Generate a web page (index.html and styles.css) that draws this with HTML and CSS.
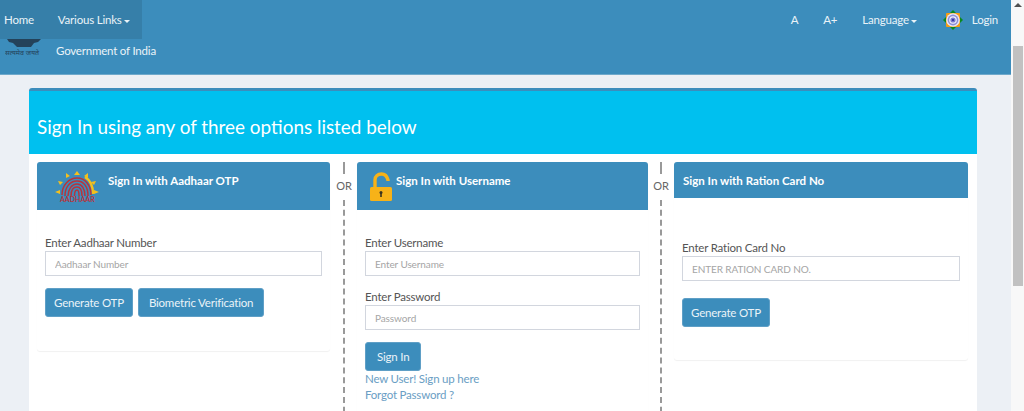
FILE: index.html
```html
<!DOCTYPE html>
<html>
<head>
  <meta charset="utf-8">
  <title>Sign In</title>
  <link rel="stylesheet" href="styles.css">
</head>
<body>
<div class="page">
  <div class="main">
    <div class="header">
      <div class="navbar">
        <div class="nav-left">
          <a class="nav-item home">Home</a>
          <a class="nav-item links">Various Links<span class="caret"></span></a>
        </div>
        <div class="nav-right">
          <a class="nav-item">A</a>
          <a class="nav-item">A+</a>
          <a class="nav-item lang">Language<span class="caret"></span></a>
          <a class="nav-item login">
            <svg class="chakra" width="20" height="20" viewBox="0 0 20 20">
              <path d="M10 0l4 4h-8zM10 20l-4-4h8zM0 10l4-4v8zM20 10l-4 4v-8z" fill="#0a8a1e"/>
              <rect x="3" y="3" width="14" height="14" rx="1" fill="#f59c12"/>
              <circle cx="10" cy="10" r="6.8" fill="#e8e8f8"/>
              <circle cx="10" cy="10" r="5.4" fill="#8f8fd8"/>
              <circle cx="10" cy="10" r="3.8" fill="#f2f2fc"/>
              <circle cx="10" cy="10" r="2.6" fill="#7a7ad0"/>
              <circle cx="10" cy="10" r="1" fill="#2a2a90"/>
            </svg>
            Login
          </a>
        </div>
      </div>
      <div class="brand">
        <div class="emblem">
          <svg width="38" height="9" viewBox="0 0 38 9">
            <path d="M2 0h34l-3 3-4 1-3 4h-14l-4-4-4-1z" fill="#24425a"/>
          </svg>
          <span class="motto">सत्यमेव जयते</span>
        </div>
        <span class="brand-name">Government of India</span>
      </div>
    </div>

    <div class="content">
      <div class="card">
        <div class="card-title">Sign In using any of three options listed below</div>
        <div class="columns">

          <div class="panel panel-aadhaar">
            <div class="panel-head head-tall">
              <div class="aadhaar-logo">
                <svg width="44" height="27" viewBox="0 0 44 27">
                  <g fill="#f5c01c">
                    <path d="M22 1l3 4h-6zM11 3l4 3-4 2zM33 3l-4 3 4 2zM3 11l5 1-3 3zM41 11l-5 1 3 3zM0 22l5-2v4zM44 22l-5-2v4z"/>
                  </g>
                  <path d="M30 7c5 3 8 9 8 17" fill="none" stroke="#f5c01c" stroke-width="2.5"/>
                  <g fill="none" stroke="#b8343c" stroke-width="1.5">
                    <path d="M7 25c0-10 7-17 15-17s14 7 14 17"/>
                    <path d="M10 26c0-9 5-15 12-15s11 6 11 15"/>
                    <path d="M13 26c0-7 4-12 9-12s8 5 8 12"/>
                    <path d="M16 26c0-5 2-9 6-9s5 4 5 9"/>
                    <path d="M19.500 26c0-3 1-6 2.500-6s2 3 2 6"/>
                  </g>
                </svg>
                <span class="aadhaar-word">AADHAAR</span>
              </div>
              <span class="head-text">Sign In with Aadhaar OTP</span>
            </div>
            <div class="panel-body">
              <label class="field-label">Enter Aadhaar Number</label>
              <input class="field" type="text" placeholder="Aadhaar Number">
              <div class="actions">
                <button class="btn">Generate OTP</button>
                <button class="btn btn-wide">Biometric Verification</button>
              </div>
            </div>
          </div>

          <div class="sep"><span class="dash short"></span><span class="or">OR</span><span class="dash"></span></div>

          <div class="panel panel-user">
            <div class="panel-head head-tall">
              <svg class="lock" width="24" height="30" viewBox="0 0 24 30">
                <path d="M6 16V8c0-4 3-6 6.500-6 3 0 5.500 2 6.500 6v1" fill="none" stroke="#f7b218" stroke-width="3.400"/>
                <rect x="1" y="15" width="22" height="14" rx="1.500" fill="#f7b218"/>
                <circle cx="12" cy="20.500" r="1.500" fill="#3a3320"/>
                <rect x="11.200" y="21" width="1.600" height="4" fill="#3a3320"/>
              </svg>
              <span class="head-text">Sign In with Username</span>
            </div>
            <div class="panel-body">
              <label class="field-label">Enter Username</label>
              <input class="field" type="text" placeholder="Enter Username">
              <label class="field-label second">Enter Password</label>
              <input class="field" type="password" placeholder="Password">
              <div class="actions">
                <button class="btn btn-sign">Sign In</button>
              </div>
              <a class="link">New User! Sign up here</a>
              <a class="link">Forgot Password ?</a>
            </div>
          </div>

          <div class="sep"><span class="dash short"></span><span class="or">OR</span><span class="dash"></span></div>

          <div class="panel panel-ration">
            <div class="panel-head head-short">
              <span class="head-text">Sign In with Ration Card No</span>
            </div>
            <div class="panel-body">
              <label class="field-label">Enter Ration Card No</label>
              <input class="field" type="text" placeholder="ENTER RATION CARD NO.">
              <div class="actions">
                <button class="btn">Generate OTP</button>
              </div>
            </div>
          </div>

        </div>
      </div>
    </div>
  </div>

  <div class="scrollbar">
    <span class="arrow"></span>
    <span class="thumb"></span>
  </div>
</div>
</body>
</html>
```

FILE: styles.css
```css
html, body { margin: 0; height: 411px; overflow: hidden; }
body { font-family: "Lato", "Open Sans", sans-serif; font-size: 11.5px; letter-spacing: -0.2px; color: #444; background: #ecf0f5; }
a { display: block; }

.page { display: flex; height: 411px; overflow: hidden; }
.main { flex: 1; min-width: 0; }

.header { height: 74px; background: #3c8dbc; border-bottom: 1px solid #6fa9cb; color: #eaf3f8; }
.navbar { display: flex; justify-content: space-between; height: 39px; }
.nav-left { display: flex; width: 142px; padding-left: 4px; box-sizing: border-box; background: #367fa9; }
.nav-right { display: flex; padding-right: 13px; }
.nav-item { line-height: 39px; white-space: nowrap; margin-left: 25px; }
.nav-left .nav-item { margin-left: 0; }
.nav-left .links { margin-left: 24px; }
.lang { margin-right: 1px; }
.caret { display: inline-block; width: 0; height: 0; margin-left: 2px; vertical-align: middle; border-top: 3px solid #eaf3f8; border-left: 3px solid transparent; border-right: 3px solid transparent; }
.login { display: flex; align-items: center; }
.chakra { margin-right: 9px; }

.brand { display: flex; align-items: flex-start; padding-left: 5px; }
.emblem { width: 51px; height: 19px; overflow: hidden; }
.emblem svg { display: block; }
.motto { display: block; font-family: "Noto Sans", sans-serif; font-size: 7px; line-height: 9px; letter-spacing: 0; color: #24425a; }
.brand-name { line-height: 24px; }

.content { padding: 13px 34px 0 29px; }
.card { height: 400px; background: #fff; border-top: 3px solid #3c8dbc; border-radius: 3px 3px 0 0; }
.card-title { height: 63px; padding: 23px 8px 0; box-sizing: border-box; background: #00c0ef; color: #fff; font-size: 18.900px; letter-spacing: 0; line-height: 26px; }

.columns { display: flex; height: 300px; padding: 8px 9px 0 8px; }
.panel { flex: none; align-self: flex-start; border-radius: 3px; box-shadow: 0 1px 1px rgba(0,0,0,0.06); }
.panel-aadhaar { width: 293px; height: 189px; }
.panel-user { width: 291px; height: 290px; }
.panel-ration { width: 294px; height: 198px; }

.panel-head { display: flex; background: #3c8dbc; color: #fff; font-weight: 700; font-size: 11.500px; letter-spacing: 0; border-radius: 3px 3px 0 0; }
.head-tall { height: 48px; }
.head-short { height: 36px; }
.head-text { line-height: 38px; }
.panel-aadhaar .head-text { margin-left: 9px; }
.panel-ration .head-text { margin-left: 9px; }

.aadhaar-logo { position: relative; width: 44px; margin-left: 18px; padding-top: 8px; }
.aadhaar-logo svg { display: block; }
.aadhaar-word { position: absolute; left: 5px; top: 33px; font-size: 7px; font-weight: 700; line-height: 8px; letter-spacing: 0; color: #b8343c; }
.lock { margin: 10px 3px 0 12px; }

.panel-body { padding: 25px 8px 0; }
.panel-ration .panel-body { padding-top: 42px; }

.field-label { display: block; line-height: 16px; color: #555; }
.field-label.second { margin-top: 13px; }
.field { display: block; width: 100%; height: 25px; box-sizing: border-box; padding: 0 9px; border: 1px solid #d2d6de; font-family: inherit; font-size: 10px; letter-spacing: -0.1px; background: #fff; outline: 0; }
.field::placeholder { color: #a5a5a5; }

.actions { display: flex; gap: 5px; margin-top: 12px; }
.btn { height: 29px; padding: 0 8px; background: #3c8dbc; border: 1px solid #5f9fc6; border-radius: 3px; color: #eaf3f8; font-family: inherit; font-size: 11.5px; letter-spacing: -0.2px; }
.btn-wide { padding: 0 10px; }
.btn-sign { padding: 0 11px; }
.panel-ration .actions { margin-top: 17px; }

.link { color: #6a9ec4; line-height: 16px; }

.sep { flex: 1; display: flex; flex-direction: column; align-items: center; height: 300px; }
.panel-aadhaar + .sep { padding-left: 1px; }
.or { line-height: 16px; font-size: 11px; letter-spacing: 0; color: #666; margin: 4px 0 6px; }
.dash { flex: 1; border-left: 2px dashed #999; }
.dash.short { flex: none; height: 12px; }

.scrollbar { position: relative; width: 13px; flex: none; background: #f8f8f8; }
.arrow { position: absolute; left: 3px; top: 3px; width: 0; height: 0; border-bottom: 4px solid #505050; border-left: 4px solid transparent; border-right: 4px solid transparent; }
.thumb { position: absolute; left: 2px; top: 46px; width: 10px; height: 240px; background: #c1c1c1; }
```
